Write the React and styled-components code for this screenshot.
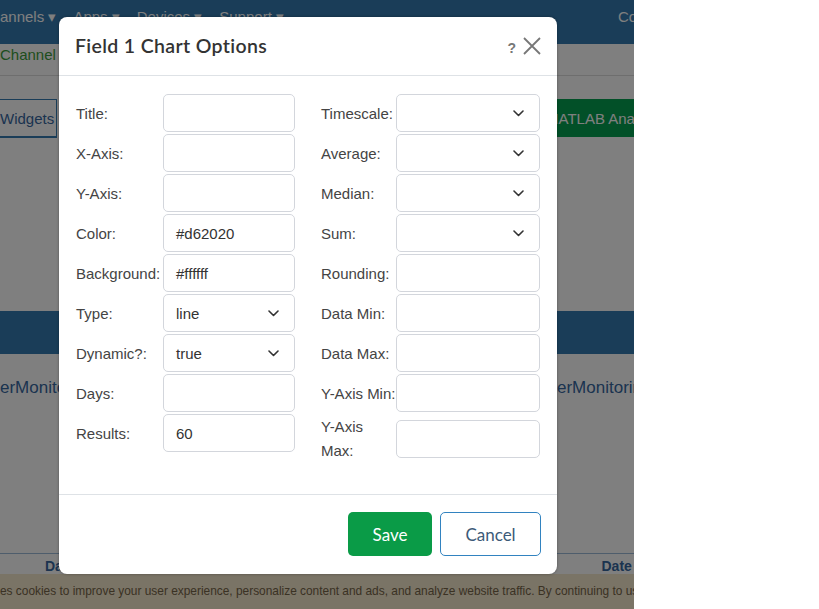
import React from "react";
import styled, { createGlobalStyle } from "styled-components";

const GlobalStyle = createGlobalStyle`
  html, body {
    margin: 0;
    padding: 0;
    background: #ffffff;
  }
  body {
    font-family: "Liberation Sans", Arial, sans-serif;
  }
`;

const leftFields = [
  { label: "Title:" },
  { label: "X-Axis:" },
  { label: "Y-Axis:" },
  { label: "Color:", value: "#d62020" },
  { label: "Background:", value: "#ffffff" },
  { label: "Type:", value: "line", select: true },
  { label: "Dynamic?:", value: "true", select: true },
  { label: "Days:" },
  { label: "Results:", value: "60" },
];

const rightFields = [
  { label: "Timescale:", select: true },
  { label: "Average:", select: true },
  { label: "Median:", select: true },
  { label: "Sum:", select: true },
  { label: "Rounding:" },
  { label: "Data Min:" },
  { label: "Data Max:" },
  { label: "Y-Axis Min:" },
  { label: "Y-Axis Max:", wrap: true },
];

const Chevron = () => (
  <svg width="11" height="7" viewBox="0 0 11 7">
    <path d="M1 1 L5.5 5.5 L10 1" fill="none" stroke="#333" strokeWidth="1.6" strokeLinecap="round" strokeLinejoin="round" />
  </svg>
);

const Field = ({ label, value, select, wrap, labelWidth }) => (
  <Row>
    <Label $width={labelWidth} $wrap={wrap}>{label}</Label>
    <Input>
      <span>{value}</span>
      {select && <Chevron />}
    </Input>
  </Row>
);

const App = () => {
  return (
    <>
      <GlobalStyle />
      <Screen>
        <Page>
          <Nav>
            <NavItem>annels ▾</NavItem>
            <NavItem>Apps ▾</NavItem>
            <NavItem>Devices ▾</NavItem>
            <NavItem>Support ▾</NavItem>
            <NavRight>Co</NavRight>
          </Nav>
          <Crumb>Channel Settings</Crumb>
          <TabsRow>
            <OutlineTab>Widgets</OutlineTab>
            <GreenTab>MATLAB Analysis</GreenTab>
          </TabsRow>
          <Blank />
          <Band />
          <Charts>
            <ChartTitle>erMonitoring</ChartTitle>
            <ChartTitle $indent={240}>erMonitoring</ChartTitle>
          </Charts>
          <TableHead>
            <HeadCell $indent={45}>Date</HeadCell>
            <HeadCell $indent={524}>Date</HeadCell>
          </TableHead>
          <Cookie>
            es cookies to improve your user experience, personalize content and ads, and analyze website traffic. By continuing to use this site
          </Cookie>

          <Backdrop>
            <Modal>
              <Header>
                <Title>Field 1 Chart Options</Title>
                <HeaderIcons>
                  <Help>?</Help>
                  <svg width="18" height="18" viewBox="0 0 18 18">
                    <path d="M1 1 L17 17 M17 1 L1 17" stroke="#777" strokeWidth="1.8" />
                  </svg>
                </HeaderIcons>
              </Header>
              <Body>
                <Column $input={132}>
                  {leftFields.map((f) => (
                    <Field key={f.label} {...f} labelWidth={87} />
                  ))}
                </Column>
                <Column $input={144}>
                  {rightFields.map((f) => (
                    <Field key={f.label} {...f} labelWidth={75} />
                  ))}
                </Column>
              </Body>
              <Footer>
                <SaveButton>Save</SaveButton>
                <CancelButton>Cancel</CancelButton>
              </Footer>
            </Modal>
          </Backdrop>
        </Page>
      </Screen>
    </>
  );
};

const Screen = styled.div`
  width: 819px;
  height: 609px;
  display: flex;
  background: #ffffff;
  overflow: hidden;
`;

const Page = styled.div`
  position: relative;
  width: 634px;
  height: 609px;
  overflow: hidden;
  background: #ffffff;
  display: flex;
  flex-direction: column;
`;

const Nav = styled.div`
  height: 44px;
  flex-shrink: 0;
  background: #347ab0;
  display: flex;
  align-items: flex-start;
  padding-top: 8px;
  box-sizing: border-box;
  color: #ffffff;
  font-size: 15px;
  gap: 17px;
`;

const NavItem = styled.div`
  white-space: nowrap;
`;

const NavRight = styled.div`
  margin-left: auto;
  width: 16px;
  overflow: hidden;
`;

const Crumb = styled.div`
  height: 32px;
  flex-shrink: 0;
  box-sizing: border-box;
  padding-top: 2px;
  font-size: 15px;
  color: #3c9c3c;
  border-bottom: 1px solid #dcdcdc;
`;

const TabsRow = styled.div`
  display: flex;
  justify-content: space-between;
  margin-top: 23px;
  height: 39px;
  flex-shrink: 0;
`;

const OutlineTab = styled.div`
  width: 57px;
  box-sizing: border-box;
  border-top: 1px solid #347ab0;
  border-bottom: 2px solid #347ab0;
  border-right: 1px solid #347ab0;
  font-size: 15px;
  color: #36679f;
  display: flex;
  align-items: center;
`;

const GreenTab = styled.div`
  background: #05a050;
  color: #ffffff;
  font-size: 15px;
  padding-left: 10px;
  height: 38px;
  width: 98px;
  box-sizing: border-box;
  white-space: nowrap;
  overflow: hidden;
  display: flex;
  align-items: center;
`;

const Blank = styled.div`
  height: 173px;
  flex-shrink: 0;
`;

const Band = styled.div`
  height: 43px;
  flex-shrink: 0;
  background: #347ab0;
`;

const Charts = styled.div`
  height: 200px;
  flex-shrink: 0;
  display: grid;
  grid-template-columns: 317px 317px;
  border-bottom: 1px solid #9cbad8;
  box-sizing: border-box;
`;

const ChartTitle = styled.div`
  padding-top: 24px;
  padding-left: ${(p) => p.$indent || 0}px;
  font-size: 17px;
  color: #36679f;
  white-space: nowrap;
  overflow: hidden;
`;

const TableHead = styled.div`
  height: 20px;
  flex-shrink: 0;
  display: flex;
  font-size: 14px;
  font-weight: bold;
  color: #36679f;
  padding-top: 4px;
  box-sizing: border-box;
`;

const HeadCell = styled.div`
  margin-left: ${(p) => p.$indent}px;
  width: 40px;
  white-space: nowrap;
`;

const Cookie = styled.div`
  flex: 1;
  background: #f4e8cc;
  color: #766448;
  font-size: 11.9px;
  font-family: "Liberation Sans", Arial, sans-serif;
  padding-top: 10px;
  white-space: nowrap;
  overflow: hidden;
  box-sizing: border-box;
`;

const Backdrop = styled.div`
  position: absolute;
  top: 0;
  left: 0;
  width: 634px;
  height: 609px;
  z-index: 10;
  background-color: rgba(0, 0, 0, 0.5);
  padding: 17px 0 0 59px;
  box-sizing: border-box;
`;

const Modal = styled.div`
  width: 498px;
  height: 557px;
  background: #ffffff;
  border-radius: 8px;
  box-shadow: 0 0 3px rgba(0, 0, 0, 0.35);
  display: flex;
  flex-direction: column;
  overflow: hidden;
`;

const Header = styled.div`
  height: 59px;
  box-sizing: border-box;
  border-bottom: 1px solid #dee2e6;
  display: flex;
  align-items: center;
  justify-content: space-between;
  padding: 0 16px 0 16px;
`;

const Title = styled.div`
  font-family: Lato, "Open Sans", sans-serif;
  font-size: 19.5px;
  font-weight: 600;
  color: #333333;
  letter-spacing: 0.35px;
  margin-top: -1px;
`;

const HeaderIcons = styled.div`
  display: flex;
  align-items: center;
  gap: 7px;
`;

const Help = styled.span`
  font-family: "Liberation Sans", Arial, sans-serif;
  font-weight: bold;
  font-size: 14px;
  color: #777777;
  margin-top: 3px;
`;

const Body = styled.div`
  display: flex;
  gap: 26px;
  padding: 18px 17px 0 17px;
  height: 419px;
  box-sizing: border-box;
  border-bottom: 1px solid #dee2e6;
`;

const Column = styled.div`
  display: flex;
  flex-direction: column;
  gap: 2px;
  --input-width: ${(p) => p.$input}px;
`;

const Row = styled.div`
  display: flex;
  align-items: center;
  min-height: 38px;
`;

const Label = styled.div`
  width: ${(p) => p.$width}px;
  flex-shrink: 0;
  font-size: 15px;
  line-height: 24px;
  padding-top: 1px;
  color: #444444;
  padding-right: ${(p) => (p.$wrap ? "30px" : "0")};
  box-sizing: border-box;
`;

const Input = styled.div`
  width: var(--input-width);
  height: 38px;
  box-sizing: border-box;
  border: 1px solid #d3d6dc;
  border-radius: 5px;
  display: flex;
  align-items: center;
  justify-content: space-between;
  padding: 0 15px 0 12px;
  font-size: 15px;
  color: #333333;
`;

const Footer = styled.div`
  flex: 1;
  display: flex;
  justify-content: flex-end;
  align-items: flex-start;
  gap: 8px;
  padding: 17px 16px 0 0;
`;

const BaseButton = styled.div`
  height: 44px;
  box-sizing: border-box;
  border-radius: 5px;
  display: flex;
  align-items: center;
  justify-content: center;
  font-family: Lato, "Open Sans", sans-serif;
  font-size: 17px;
`;

const SaveButton = styled(BaseButton)`
  width: 84px;
  background: #0a9b47;
  color: #ffffff;
`;

const CancelButton = styled(BaseButton)`
  width: 101px;
  background: #ffffff;
  border: 1px solid #3283c0;
  color: #3c5a78;
`;

export default App;
